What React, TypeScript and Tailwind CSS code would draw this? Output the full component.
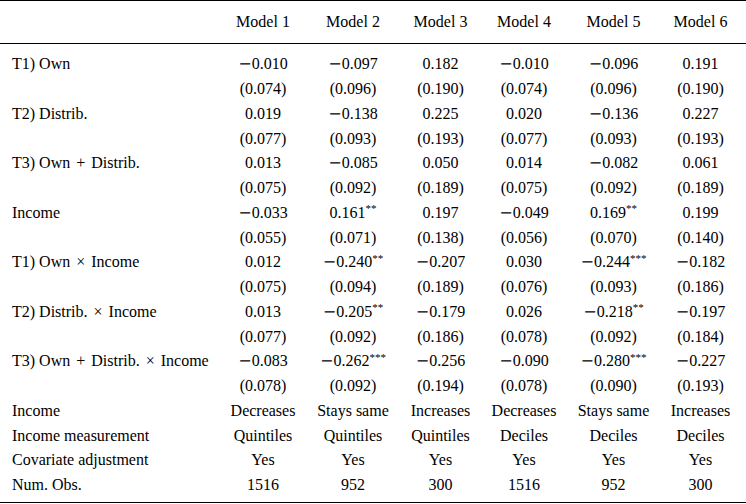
const models = ["Model 1", "Model 2", "Model 3", "Model 4", "Model 5", "Model 6"];

type Cell = { v: string; s?: string };

const rows: { label: string; cells: Cell[] }[] = [
  {
    label: "T1) Own",
    cells: [{ v: "−0.010" }, { v: "−0.097" }, { v: "0.182" }, { v: "−0.010" }, { v: "−0.096" }, { v: "0.191" }],
  },
  {
    label: "",
    cells: [{ v: "(0.074)" }, { v: "(0.096)" }, { v: "(0.190)" }, { v: "(0.074)" }, { v: "(0.096)" }, { v: "(0.190)" }],
  },
  {
    label: "T2) Distrib.",
    cells: [{ v: "0.019" }, { v: "−0.138" }, { v: "0.225" }, { v: "0.020" }, { v: "−0.136" }, { v: "0.227" }],
  },
  {
    label: "",
    cells: [{ v: "(0.077)" }, { v: "(0.093)" }, { v: "(0.193)" }, { v: "(0.077)" }, { v: "(0.093)" }, { v: "(0.193)" }],
  },
  {
    label: "T3) Own + Distrib.",
    cells: [{ v: "0.013" }, { v: "−0.085" }, { v: "0.050" }, { v: "0.014" }, { v: "−0.082" }, { v: "0.061" }],
  },
  {
    label: "",
    cells: [{ v: "(0.075)" }, { v: "(0.092)" }, { v: "(0.189)" }, { v: "(0.075)" }, { v: "(0.092)" }, { v: "(0.189)" }],
  },
  {
    label: "Income",
    cells: [{ v: "−0.033" }, { v: "0.161", s: "**" }, { v: "0.197" }, { v: "−0.049" }, { v: "0.169", s: "**" }, { v: "0.199" }],
  },
  {
    label: "",
    cells: [{ v: "(0.055)" }, { v: "(0.071)" }, { v: "(0.138)" }, { v: "(0.056)" }, { v: "(0.070)" }, { v: "(0.140)" }],
  },
  {
    label: "T1) Own × Income",
    cells: [{ v: "0.012" }, { v: "−0.240", s: "**" }, { v: "−0.207" }, { v: "0.030" }, { v: "−0.244", s: "***" }, { v: "−0.182" }],
  },
  {
    label: "",
    cells: [{ v: "(0.075)" }, { v: "(0.094)" }, { v: "(0.189)" }, { v: "(0.076)" }, { v: "(0.093)" }, { v: "(0.186)" }],
  },
  {
    label: "T2) Distrib. × Income",
    cells: [{ v: "0.013" }, { v: "−0.205", s: "**" }, { v: "−0.179" }, { v: "0.026" }, { v: "−0.218", s: "**" }, { v: "−0.197" }],
  },
  {
    label: "",
    cells: [{ v: "(0.077)" }, { v: "(0.092)" }, { v: "(0.186)" }, { v: "(0.078)" }, { v: "(0.092)" }, { v: "(0.184)" }],
  },
  {
    label: "T3) Own + Distrib. × Income",
    cells: [{ v: "−0.083" }, { v: "−0.262", s: "***" }, { v: "−0.256" }, { v: "−0.090" }, { v: "−0.280", s: "***" }, { v: "−0.227" }],
  },
  {
    label: "",
    cells: [{ v: "(0.078)" }, { v: "(0.092)" }, { v: "(0.194)" }, { v: "(0.078)" }, { v: "(0.090)" }, { v: "(0.193)" }],
  },
  {
    label: "Income",
    cells: [{ v: "Decreases" }, { v: "Stays same" }, { v: "Increases" }, { v: "Decreases" }, { v: "Stays same" }, { v: "Increases" }],
  },
  {
    label: "Income measurement",
    cells: [{ v: "Quintiles" }, { v: "Quintiles" }, { v: "Quintiles" }, { v: "Deciles" }, { v: "Deciles" }, { v: "Deciles" }],
  },
  {
    label: "Covariate adjustment",
    cells: [{ v: "Yes" }, { v: "Yes" }, { v: "Yes" }, { v: "Yes" }, { v: "Yes" }, { v: "Yes" }],
  },
  {
    label: "Num. Obs.",
    cells: [{ v: "1516" }, { v: "952" }, { v: "300" }, { v: "1516" }, { v: "952" }, { v: "300" }],
  },
];

const cols = "grid grid-cols-[220px_86px_94px_81px_86px_93px_81px] pr-[5px]";

// math-style minus: DejaVu's glyph is as wide as the TeX one
function Num({ v }: { v: string }) {
  if (v.startsWith("−")) {
    return (
      <>
        <span className="font-['DejaVu_Serif',serif] font-light">−</span>
        {v.slice(1)}
      </>
    );
  }
  return <>{v}</>;
}

// labels: give + and × the wider math spacing
function Label({ text }: { text: string }) {
  const parts = text.split(/ ([+×]) /);
  return (
    <>
      {parts.map((p, i) =>
        p === "+" || p === "×" ? (
          <span key={i} className="px-[2px]">
            {" "}
            {p}{" "}
          </span>
        ) : (
          <span key={i}>{p}</span>
        )
      )}
    </>
  );
}

export default function App() {
  return (
    <div className="w-[746px] h-[504px] bg-white text-black font-['Liberation_Serif','Times_New_Roman',serif] text-[16px] leading-[24.75px]">
      <div className="border-t border-black border-b-[1.5px]">
        {/* header */}
        <div className={`${cols} pt-[9px] pb-[8px] border-b border-black`}>
          <div />
          {models.map((m) => (
            <div key={m} className="text-center whitespace-nowrap">
              {m}
            </div>
          ))}
        </div>

        {/* body */}
        <div className="pt-[8.5px] pb-[4px]">
          {rows.map((r, i) => (
            <div key={i} className={`${cols} h-[24.75px]`}>
              <div className="pl-[12px] whitespace-pre">
                <Label text={r.label} />
              </div>
              {r.cells.map((c, j) => (
                <div key={j} className="text-center whitespace-nowrap">
                  <Num v={c.v} />
                  {c.s && <sup className="text-[11px]">{c.s}</sup>}
                </div>
              ))}
            </div>
          ))}
        </div>
      </div>
    </div>
  );
}
